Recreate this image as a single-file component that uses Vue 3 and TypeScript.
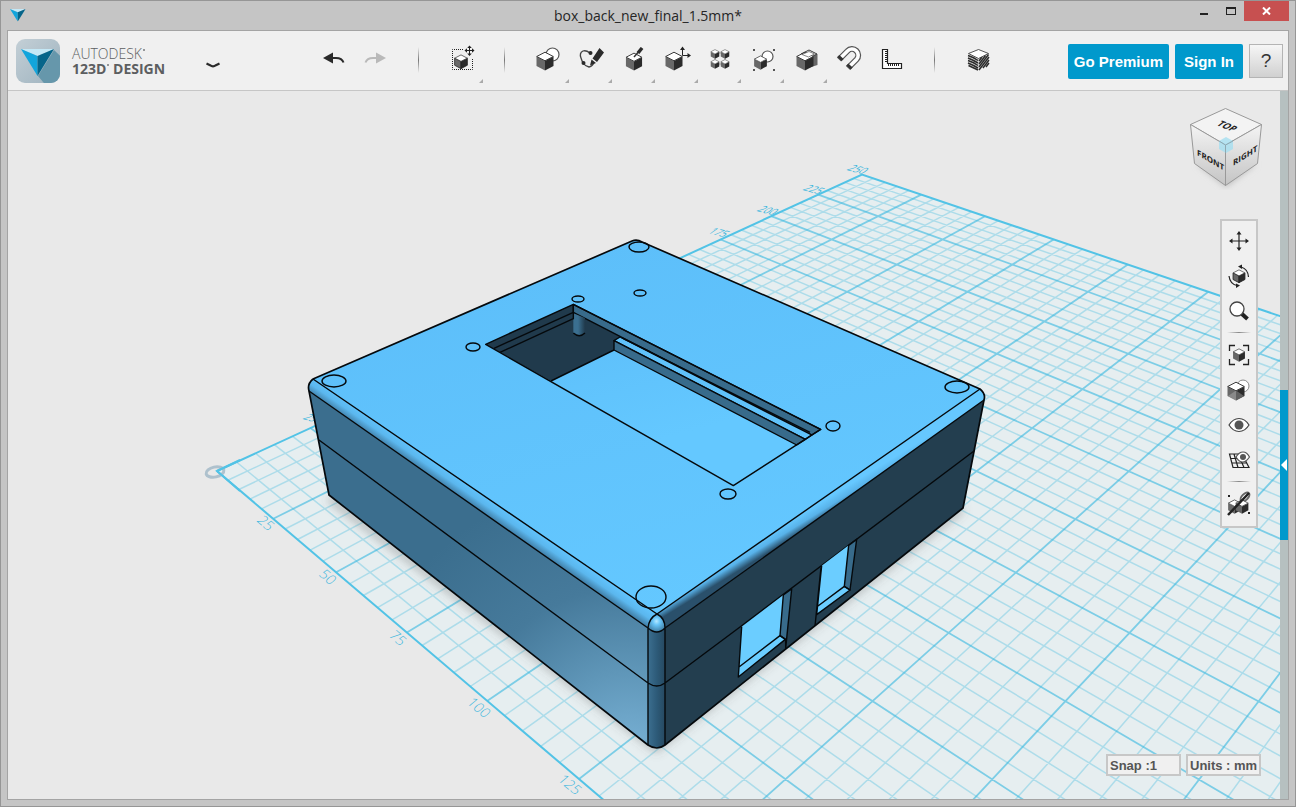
<script setup lang="ts">
interface Tool {
  id: string
  label: string
  menu?: boolean
}
interface PlaneLabel {
  text: string
  x: number
  y: number
}
type Point = [number, number]

const tools: Tool[] = [
  { id: 'undo', label: 'Undo' },
  { id: 'redo', label: 'Redo' },
  { id: 'sep', label: '' },
  { id: 'transform', label: 'Transform', menu: true },
  { id: 'sep', label: '' },
  { id: 'primitives', label: 'Primitives', menu: true },
  { id: 'sketch', label: 'Sketch', menu: true },
  { id: 'construct', label: 'Construct', menu: true },
  { id: 'modify', label: 'Modify', menu: true },
  { id: 'pattern', label: 'Pattern', menu: true },
  { id: 'grouping', label: 'Grouping', menu: true },
  { id: 'combine', label: 'Combine', menu: true },
  { id: 'snap', label: 'Snap' },
  { id: 'measure', label: 'Measure' },
  { id: 'sep', label: '' },
  { id: 'material', label: 'Material' },
]

const navTools: Tool[] = [
  { id: 'pan', label: 'Pan' },
  { id: 'orbit', label: 'Orbit' },
  { id: 'zoom', label: 'Zoom' },
  { id: 'sep', label: '' },
  { id: 'fit', label: 'Fit' },
  { id: 'shading', label: 'Materials and outlines' },
  { id: 'show', label: 'Show solids' },
  { id: 'grid', label: 'Grid visibility' },
  { id: 'sep', label: '' },
  { id: 'snapping', label: 'Group snapping' },
]

const BED = 250

// Perspective projection of a work-plane point in millimetres.
function project(u: number, v: number): Point {
  const w = 1 - 0.0021176 * u + 0.0021052 * v
  return [
    (217 + 1.6698 * u + 4.3947 * v) / w,
    (471 + 0.8144 * u - 0.8187 * v) / w,
  ]
}

function fmt(p: Point): string {
  return `${p[0].toFixed(1)} ${p[1].toFixed(1)}`
}

function gridPath(major: boolean): string {
  let d = ''
  for (let t = 5; t < BED; t += 5) {
    if ((t % 25 === 0) !== major) continue
    d += `M${fmt(project(t, 0))}L${fmt(project(t, BED))}`
    d += `M${fmt(project(0, t))}L${fmt(project(BED, t))}`
  }
  return d
}

const minorLines = gridPath(false)
const majorLines = gridPath(true)
const bed = 'M' + [project(0, 0), project(0, BED), project(BED, BED), project(BED, 0)].map(fmt).join('L') + 'Z'

const nearLabels: PlaneLabel[] = [
  { text: '25', x: 256, y: 521 },
  { text: '50', x: 318, y: 575 },
  { text: '75', x: 388, y: 636 },
  { text: '100', x: 466, y: 703 },
  { text: '125', x: 557, y: 780 },
]
const farLabels: PlaneLabel[] = [
  { text: '25', x: 302, y: 419 },
  { text: '175', x: 707, y: 233 },
  { text: '200', x: 756, y: 211 },
  { text: '225', x: 802, y: 190 },
  { text: '250', x: 846, y: 170 },
]

const holes: number[][] = [
  [639, 247, 10, 5],
  [640, 293, 6, 3],
  [578, 299, 6, 3],
  [473, 347, 7, 4],
  [833, 426, 7, 5],
  [728, 494, 8, 5],
  [334, 381, 12, 6],
  [957, 387, 12, 6],
  [651, 597, 15, 11],
]
</script>

<template>
  <div class="window">
    <svg class="defs" aria-hidden="true">
      <symbol id="cube" viewBox="0 0 18 20">
        <path d="M.5 5.5 9 10v9.5L.5 15z" fill="#686868" />
        <path d="M17.500 5.500 9 10v9.500L17.500 15z" fill="#2b2b2b" />
        <path d="M9 1.200 17.300 5.500 9 9.800.700 5.500z" fill="#fff" stroke="#3a3a3a" stroke-width="1" />
      </symbol>
      <symbol id="mark" viewBox="0 0 34 28">
        <path d="M0 1 33 1 16.500 8z" fill="#c4e8f6" />
        <path d="M0 1 16.500 8V28z" fill="#12a5dc" />
        <path d="M33 1 16.500 8V28z" fill="#05658a" />
      </symbol>
    </svg>

    <header class="titlebar">
      <svg class="app-icon" viewBox="0 0 34 28"><use href="#mark" /></svg>
      <h1>box_back_new_final_1.5mm*</h1>
      <div class="window-buttons">
        <button type="button" aria-label="Minimize"><i class="dash"></i></button>
        <button type="button" aria-label="Maximize"><i class="square"></i></button>
        <button type="button" class="close" aria-label="Close">
          <svg width="9" height="8" viewBox="0 0 9 8"><path d="M1 .5 8 7.500M8 .5 1 7.500" stroke="#fff" stroke-width="2" /></svg>
        </button>
      </div>
    </header>

    <div class="client">
      <div class="toolbar">
        <div class="brand">
          <svg class="logo" viewBox="0 0 44 44">
            <defs>
              <linearGradient id="tile" x2="1" y2="1">
                <stop offset="0" stop-color="#c3cfd6" />
                <stop offset="1" stop-color="#9fb3bf" />
              </linearGradient>
              <clipPath id="tileClip"><rect width="44" height="44" rx="9" /></clipPath>
            </defs>
            <g clip-path="url(#tileClip)">
              <rect width="44" height="44" fill="url(#tile)" />
              <path d="M38 11 56 28V56H38L22 37z" fill="#6697ab" />
            </g>
            <use href="#mark" x="5" y="9" width="34" height="28" />
          </svg>
          <div class="brand-name">
            <span><span class="reg">AUTODESK</span></span>
            <strong><span class="reg">123D</span> DESIGN</strong>
          </div>
          <button type="button" class="chevron" aria-label="Application menu">
            <svg width="14" height="7" viewBox="0 0 14 7"><path d="M.5 1.500 4 3.200Q7 5.500 10 3.200L13.500 1.500" fill="none" stroke="#2a2a2a" stroke-width="2.200" /></svg>
          </button>
        </div>

        <nav class="tools" aria-label="Tools">
          <template v-for="(tool, i) in tools" :key="i">
            <span v-if="tool.id === 'sep'" class="divider"></span>
            <button v-else type="button" :class="{ menu: tool.menu }" :aria-label="tool.label">
              <svg :viewBox="`${312 + 43 * i} 31 43 59`">
                <g v-if="tool.id === 'undo'" fill="#292929">
                  <path d="M323 58 333 52.500V63.500z" />
                  <path d="M332 58h4q6 0 7.500 4.500" fill="none" stroke="#292929" stroke-width="2" />
                </g>
                <g v-else-if="tool.id === 'redo'" fill="#b9b9b9">
                  <path d="M386 58 376 52.500V63.500z" />
                  <path d="M377 58h-4q-6 0-7.500 4.500" fill="none" stroke="#b9b9b9" stroke-width="2" />
                </g>
                <g v-else-if="tool.id === 'transform'" fill="none" stroke="#222">
                  <path d="M463 49.500H452.500V69.500H472.500V59" stroke-dasharray="1 1" />
                  <use href="#cube" x="454" y="54" width="14" height="15" />
                  <path d="M469.500 46.500V55M465 50.500H474" />
                  <path d="M469.500 45.500l2.300 2.500h-4.600zM469.500 56l2.300-2.500h-4.600zM464.500 50.500l2.500-2.300v4.600zM474.500 50.500l-2.500-2.300v4.600z" fill="#222" stroke="none" />
                </g>
                <g v-else-if="tool.id === 'primitives'">
                  <circle cx="552.500" cy="54.500" r="6.500" fill="#fff" stroke="#555" stroke-width="1.200" />
                  <use href="#cube" x="536" y="51" width="18" height="20" />
                </g>
                <g v-else-if="tool.id === 'sketch'" fill="#2b2b2b">
                  <path d="M590 53q-4-3-7-2-4 2-2 7 1 3 2 5 2 3 6 4 4-1 5-5" fill="none" stroke="#444" stroke-width="1.300" />
                  <circle cx="590.500" cy="53" r="2" /><circle cx="583.500" cy="63" r="2" />
                  <path d="M599.500 48 604 52.500 597 62 592.500 58.500zM591.500 59.500 596 63 590 65.500z" />
                </g>
                <g v-else-if="tool.id === 'construct'">
                  <use href="#cube" x="625" y="52" width="18" height="19" />
                  <path d="M634 57 642 48" stroke="#333" stroke-width="1.500" />
                  <path d="M638 53 642 48" stroke="#2b2b2b" stroke-width="3.500" />
                </g>
                <g v-else-if="tool.id === 'modify'" fill="#222">
                  <use href="#cube" x="665" y="51" width="18" height="20" />
                  <path d="M682.500 49V55.500H688" fill="none" stroke="#222" />
                  <path d="M682.500 46.500l2.500 3.500h-5zM691 55.500l-3.500-2.500v5z" />
                </g>
                <g v-else-if="tool.id === 'pattern'">
                  <path d="M715 54V63M725 54V63M716 53H726M716 64H726" stroke="#aaa" />
                  <use href="#cube" x="710" y="49" width="10" height="10" />
                  <use href="#cube" x="720" y="49" width="10" height="10" />
                  <use href="#cube" x="710" y="59" width="10" height="10" />
                  <use href="#cube" x="720" y="59" width="10" height="10" />
                </g>
                <g v-else-if="tool.id === 'grouping'">
                  <circle cx="767.500" cy="56.500" r="5.500" fill="#fff" stroke="#555" stroke-width="1.200" />
                  <use href="#cube" x="753" y="55" width="15" height="15" />
                  <path d="M753 49h2v2h-2zM773 49h2v2h-2zM753 69h2v2h-2zM773 69h2v2h-2z" fill="#555" />
                </g>
                <g v-else-if="tool.id === 'combine'">
                  <path d="M805 55 817.500 54V65L805 69z" fill="#666" />
                  <path d="M801 54 809 50 817 54 810 57.500z" fill="#fff" stroke="#3a3a3a" />
                  <use href="#cube" x="796" y="51" width="18" height="20" />
                  <path d="M802 54.500 809 51.500 814.500 54 808.500 57z" fill="#fff" stroke="#555" stroke-width=".7" />
                </g>
                <g v-else-if="tool.id === 'snap'" fill="none">
                  <path d="M839 59.500 847.500 51A5.500 5.500 0 0 1 856.500 59.500L848 68" stroke="#555" stroke-width="6" />
                  <path d="M840 58.500 847.500 51A5.500 5.500 0 0 1 856.500 59.500L849 67" stroke="#fff" stroke-width="3.600" />
                  <path d="M839.500 59 841.500 57M848.500 67.500 850.500 65.500" stroke="#333" stroke-width="6" />
                </g>
                <g v-else-if="tool.id === 'measure'" fill="none" stroke="#222">
                  <path d="M882.500 49.500h5V63.500h14v5h-19z" fill="#fff" stroke-width="1.200" />
                  <path d="M885 51.500h2M885 53.500h2M885 55.500h2M885 57.500h2M885 59.500h2M885 61.500h2M888.500 64v2M890.500 64v2M892.500 64v2M894.500 64v2M896.500 64v2M898.500 64v2" />
                </g>
                <g v-else-if="tool.id === 'material'" fill="none" stroke="#2b2b2b">
                  <path d="M968 54 978.500 58V70L968 65zM989 54 978.500 58V70L989 64z" fill="#ddd" stroke="none" />
                  <path d="M968 55.500Q973 57 978 60.500M968 58Q973 60 978 63M968 60.500Q973 62 978 65.500M968 63Q973 65 978 68M968.500 65.500 978 70" stroke-width="1.500" />
                  <path d="M979 61 982 57M979 64 985.500 55.500M979 67 988.500 54.500M979 70 989 57M983 68 989 60M986 67 989 63" stroke-width="1.400" />
                  <path d="M978.500 49.500 988.500 53.500 978.500 58.500 968.500 53.500z" fill="#fff" stroke-width=".8" />
                </g>
              </svg>
            </button>
          </template>
        </nav>

        <div class="account">
          <button type="button" class="primary">Go Premium</button>
          <button type="button" class="primary">Sign In</button>
          <button type="button" class="help">?</button>
        </div>
      </div>

      <main class="stage">
        <svg class="scene" viewBox="8 91 1280 708" preserveAspectRatio="xMidYMid slice">
          <defs>
            <linearGradient id="topFace" gradientUnits="userSpaceOnUse" x1="600" y1="240" x2="700" y2="610">
              <stop offset="0" stop-color="#5dbffa" />
              <stop offset="1" stop-color="#64c8ff" />
            </linearGradient>
            <radialGradient id="leftFace" gradientUnits="userSpaceOnUse" cx="630" cy="755" r="280">
              <stop offset="0" stop-color="#79b2d6" />
              <stop offset=".3" stop-color="#5f96b8" />
              <stop offset=".6" stop-color="#467a9b" />
              <stop offset="1" stop-color="#3b6e8e" />
            </radialGradient>
            <linearGradient id="leftFillet" gradientUnits="userSpaceOnUse" x1="450" y1="471" x2="441" y2="484">
              <stop offset="0" stop-color="#62c4fd" />
              <stop offset=".5" stop-color="#5bb7ee" />
              <stop offset="1" stop-color="#407da5" />
            </linearGradient>
            <linearGradient id="rightFillet" gradientUnits="userSpaceOnUse" x1="792" y1="520" x2="800" y2="533">
              <stop offset="0" stop-color="#66c8ff" />
              <stop offset=".5" stop-color="#58b2e9" />
              <stop offset="1" stop-color="#2a506b" />
            </linearGradient>
            <linearGradient id="column">
              <stop offset="0" stop-color="#3c6f90" />
              <stop offset=".5" stop-color="#2d5b79" />
              <stop offset="1" stop-color="#264961" />
            </linearGradient>
            <linearGradient id="pin">
              <stop offset="0" stop-color="#3b6f90" />
              <stop offset=".4" stop-color="#3b6f90" />
              <stop offset="1" stop-color="#203a4c" />
            </linearGradient>
            <radialGradient id="ball" cx=".5" cy=".4" r=".7">
              <stop offset="0" stop-color="#b5e8ff" />
              <stop offset=".3" stop-color="#68c5f8" />
              <stop offset="1" stop-color="#356b8e" />
            </radialGradient>
            <filter id="soft"><feGaussianBlur stdDeviation="5" /></filter>
          </defs>

          <path :d="bed" fill="#e6eef0" />
          <path :d="minorLines" class="minor" />
          <path :d="majorLines" class="major" />
          <path :d="bed" class="bed-edge" />
          <ellipse cx="215" cy="472" rx="9" ry="5" fill="none" stroke="#9fb6c5" stroke-opacity=".8" stroke-width="3" transform="rotate(-12 215 472)" />
          <path d="M217 471 240 460M217 471 240 491" class="bed-edge" />

          <g class="ruler">
            <text v-for="l in nearLabels" :key="l.text" :transform="`translate(${l.x} ${l.y}) rotate(40) skewX(-10)`" font-size="14">{{ l.text }}</text>
            <text v-for="l in farLabels" :key="l.text" class="far" :transform="`translate(${l.x} ${l.y}) rotate(14) skewX(-40)`" font-size="10">{{ l.text }}</text>
          </g>

          <path d="M330 498 656 748 962 508" fill="none" stroke="#555" stroke-opacity=".35" stroke-width="8" filter="url(#soft)" />

          <g class="model">
            <path d="M309 391 648 628V745L329 495z" fill="url(#leftFace)" />
            <path d="M665 628 984 400 963 508 665 745z" fill="#233e4f" />
            <path d="M648 628Q657 636 665 628V745Q657 751 648 745z" fill="url(#column)" />
            <path d="M313 379 635 240 641 242 980 389 657 614z" fill="url(#topFace)" />
            <path d="M313 379 657 614 648 628 309 391Q307 384 313 379z" fill="url(#leftFillet)" />
            <path d="M657 614 980 389Q985 393 984 400L665 628z" fill="url(#rightFillet)" />
            <path d="M648 628Q649 618 657 614 665 618 665 628 657 636 648 628z" fill="url(#ball)" />
            <g class="edges">
              <path d="M313 379 632 241Q637 239 642 242L980 389Q986 394 984 400L963 508 665 745Q657 751 648 745L329 495 309 391Q307 384 313 379" stroke-width="1.700" />
              <path d="M313 379 657 614 980 389M309 391 648 628Q657 636 665 628L984 400M319 440 648 683Q657 689 665 683L740 627 974 451M648 628V745M665 628V745M648 628Q649 618 657 614 665 618 665 628" />
            </g>
          </g>

          <g transform="translate(450 230) scale(.33333)" class="edges detail">
            <path d="M107 343 370 223 1112 598 850 767z" fill="url(#topFace)" stroke="none" />
            <path d="M107 343 370 223 540 318 495 330 492 360 303 453z" fill="#203a4c" stroke="none" />
            <path d="M370 223 1112 598 1085 615 370 247z" fill="#386b8b" />
            <path d="M370 250V309Q388 325 405 309V264z" fill="url(#pin)" stroke="none" />
            <path d="M370 309Q388 325 405 309" />
            <path d="M492 332 510 321 1085 615 1066 628z" fill="#60c2fa" />
            <path d="M492 332 1066 628 1040 645 492 360z" fill="#386b8b" />
            <path d="M132 355 370 247M150 367 370 266M370 223V268M303 453 492 360M515 323 1080 607M520 326 600 365" />
            <path d="M107 343 370 223 1112 598 850 767z" />
          </g>

          <g transform="translate(600 520) scale(.33333)" class="edges detail">
            <path d="M425 320 550 225 540 347 556 358 415 471z" fill="#6bcdff" stroke="none" />
            <path d="M550 225 575 207 557 385V358L540 347z" fill="#386b8b" />
            <path d="M425 320 415 471 556 358 540 347 417 441" />
            <path d="M665 137 746 76 733 199 750 210 650 284z" fill="#6bcdff" stroke="none" />
            <path d="M746 76 770 58 750 210 733 199z" fill="#386b8b" />
            <path d="M665 137 650 284 750 210 733 199 654 258M663 143 645 318" />
          </g>

          <ellipse v-for="(h, i) in holes" :key="i" :cx="h[0]" :cy="h[1]" :rx="h[2]" :ry="h[3]" class="hole" />
        </svg>

        <svg class="view-cube" viewBox="1180 98 92 98" role="img" aria-label="View cube">
          <defs>
            <linearGradient id="cubeSide" x2="0" y2="1">
              <stop offset="0" stop-color="#f4f4f4" />
              <stop offset="1" stop-color="#c4c4c4" />
            </linearGradient>
            <filter id="cubeShadow"><feGaussianBlur stdDeviation="3" /></filter>
          </defs>
          <path d="M1197 164 1226 187 1256 164" fill="#bbb" filter="url(#cubeShadow)" />
          <g stroke="#999" stroke-width="1">
            <path d="M1190.500 124.500 1225.500 108.500 1261.500 124.500 1225.500 145z" fill="#f3f3f3" />
            <path d="M1190.500 124.500 1225.500 145V185.500L1194.500 163.500z" fill="url(#cubeSide)" />
            <path d="M1261.500 124.500 1225.500 145V185.500L1257.500 163.500z" fill="url(#cubeSide)" />
          </g>
          <path d="M1226 137 1233 141V149L1226 153 1219 149V141z" fill="#a5dff0" fill-opacity=".8" />
          <path d="M1219 141 1225.500 145 1233 141M1225.500 145V153" fill="none" stroke="#8fa9b2" />
          <g class="cube-text">
            <text class="top-face" transform="translate(1216 125) rotate(22) skewX(-30)">TOP</text>
            <text transform="translate(1197 155) skewY(30)">FRONT</text>
            <text transform="translate(1233 166) skewY(-32)">RIGHT</text>
          </g>
        </svg>

        <div class="nav-panel" role="toolbar" aria-label="Navigation">
          <template v-for="(tool, i) in navTools" :key="i">
            <span v-if="tool.id === 'sep'" class="rule"></span>
            <button v-else type="button" :aria-label="tool.label">
              <svg viewBox="-17 -17 34 34">
                <g v-if="tool.id === 'pan'" fill="#222">
                  <path d="M0-8V8M-8 0H8" stroke="#222" stroke-width="1.200" />
                  <path d="M0-10 2.500-6.500h-5zM0 10 2.500 6.500h-5zM-10 0-6.500-2.500v5zM10 0 6.500-2.500v5z" />
                </g>
                <g v-else-if="tool.id === 'orbit'" fill="none" stroke="#222" stroke-width="1.200">
                  <use href="#cube" x="-7" y="-7" width="14" height="14" />
                  <path d="M2-9Q9-7 9.500 1M-10 0Q-9 8-2 9.500" />
                  <path d="M-1-9.500 3-11.500V-7zM1 9.500-3 7.500V12z" fill="#222" stroke="none" />
                </g>
                <g v-else-if="tool.id === 'zoom'">
                  <path d="M3 3 8.500 8" stroke="#222" stroke-width="4" />
                  <circle cx="-2" cy="-2" r="7" fill="#fff" stroke="#444" stroke-width="1.300" />
                </g>
                <g v-else-if="tool.id === 'fit'">
                  <path d="M-9.500-4V-9.500H-4M4-9.500H9.500V-4M9.500 4V9.500H4M-4 9.500H-9.500V4" fill="none" stroke="#222" stroke-width="1.300" />
                  <use href="#cube" x="-7" y="-7" width="14" height="14" />
                </g>
                <g v-else-if="tool.id === 'shading'">
                  <circle cx="4" cy="-4" r="6" fill="#fff" stroke="#888" />
                  <use href="#cube" x="-12" y="-9" width="18" height="20" />
                  <path d="M-11 6-3 .5V10.500z" fill="#aaa" fill-opacity=".5" />
                  <path d="M-3 .5 5 6-3 10.500z" fill="#777" fill-opacity=".7" />
                </g>
                <g v-else-if="tool.id === 'show'">
                  <path d="M-10 0Q-6-6.500 0-6.500T10 0Q6 6.500 0 6.500T-10 0z" fill="#fff" stroke="#444" stroke-width="1.200" />
                  <circle r="4.500" fill="#555" />
                </g>
                <g v-else-if="tool.id === 'grid'" fill="none" stroke="#222" stroke-width="1.200">
                  <path d="M-9.500-6H3L10 7.500H-6zM-8.500-1.500H5.500M-7 3H8M-5-6-1 7.500M-1-6 5 7.500" />
                  <path d="M-3-3Q0-8 4-8T10.500-3Q7 2 3.500 2T-3-3z" fill="#fff" stroke="#555" />
                  <circle cx="4" cy="-3" r="3" fill="#555" stroke="none" />
                </g>
                <g v-else-if="tool.id === 'snapping'">
                  <ellipse cx="6" cy="-7" rx="5.500" ry="3" transform="rotate(-45 6 -7)" fill="#fff" stroke="#666" stroke-width="2" />
                  <use href="#cube" x="-12" y="-5" width="15" height="15" />
                  <use href="#cube" x="-4" y="-5" width="14" height="15" />
                  <path d="M-11 11 10-11" stroke="#222" stroke-width="2.500" />
                  <path d="M-11-9h2v2h-2zM9 8h2v2h-2z" fill="#222" />
                </g>
              </svg>
            </button>
          </template>
        </div>

        <div class="status">
          <button type="button">Snap :1</button>
          <button type="button">Units : mm</button>
        </div>

        <div class="drawer">
          <button type="button" aria-label="Open parts panel">
            <svg width="6" height="12" viewBox="0 0 6 12"><path d="M6 0V12L0 6z" fill="#fff" /></svg>
          </button>
        </div>
      </main>
    </div>
  </div>
</template>

<style>
body {
  margin: 0;
}
</style>

<style scoped>
.window {
  box-sizing: border-box;
  display: flex;
  flex-direction: column;
  height: 100vh;
  padding: 0 6px 6px;
  border: 1px solid #969696;
  background: #c5c5c5;
  font-family: "Liberation Sans", Arial, sans-serif;
  overflow: hidden;
}
.defs {
  position: absolute;
  width: 0;
  height: 0;
}
button {
  margin: 0;
  padding: 0;
  border: 0;
  background: none;
  color: inherit;
  font: inherit;
}
svg {
  display: block;
}
.titlebar {
  flex: 0 0 29px;
  display: grid;
  grid-template-columns: 1fr auto 1fr;
  align-items: start;
}
.app-icon {
  width: 16px;
  height: 14px;
  margin: 7px 0 0 3px;
}
h1 {
  margin: 0;
  color: #262626;
  font: 400 14px/29px "Open Sans", "Noto Sans", sans-serif;
}
.window-buttons {
  display: flex;
  justify-content: flex-end;
}
.window-buttons button {
  display: grid;
  place-items: center;
  width: 27px;
  height: 20px;
}
.window-buttons .close {
  width: 45px;
  background: #c75050;
}
.dash {
  width: 8px;
  height: 2px;
  margin-top: 6px;
  background: #222;
}
.square {
  box-sizing: border-box;
  width: 10px;
  height: 8px;
  border: 1px solid #222;
  border-top-width: 2px;
}
.client {
  flex: 1;
  display: flex;
  flex-direction: column;
  min-height: 0;
  border: 1px solid #a4a4a4;
}
.toolbar {
  flex: 0 0 59px;
  display: flex;
  background: #f0f0f0;
  border-bottom: 1px solid #c6c6c6;
}
.brand {
  flex: 0 0 296px;
  display: flex;
  align-items: center;
  padding-left: 8px;
}
.logo {
  width: 44px;
  height: 44px;
}
.brand-name {
  width: 120px;
  margin-left: 12px;
  color: #5c5e60;
  font: 300 14px/15px "Open Sans", "Noto Sans", sans-serif;
  white-space: nowrap;
}
.brand-name > span,
.brand-name > strong {
  display: block;
}
.brand-name > strong {
  font-weight: 700;
}
.reg::after {
  content: "";
  display: inline-block;
  width: 2px;
  height: 2px;
  margin-left: 1px;
  border-radius: 1px;
  background: #77797b;
  vertical-align: 8px;
}
.chevron {
  display: grid;
  place-items: center;
  width: 42px;
  height: 40px;
  padding-top: 9px;
}
.tools {
  display: flex;
}
.tools button,
.divider {
  position: relative;
  width: 43px;
  height: 59px;
}
.tools svg {
  width: 43px;
  height: 59px;
}
.menu::after {
  content: "";
  position: absolute;
  right: 1px;
  bottom: 7px;
  border: 2px solid transparent;
  border-right-color: #aaa;
  border-bottom-color: #aaa;
}
.divider::before {
  content: "";
  display: block;
  width: 1px;
  height: 26px;
  margin: 16px 0 0 20px;
  background: linear-gradient(#f0f0f0, #777, #f0f0f0);
}
.account {
  display: flex;
  gap: 6px;
  margin-left: auto;
  padding: 13px 5px 0 0;
}
.account button {
  box-sizing: border-box;
  height: 35px;
}
.account .primary {
  padding: 0 6px;
  border-radius: 2px;
  background: #0099cc;
  color: #fff;
  font-size: 15px;
  font-weight: 700;
}
.account .primary + .primary {
  padding: 0 9px;
}
.account .help {
  width: 34px;
  height: 34px;
  border: 1px solid #b4b4b4;
  background: linear-gradient(#f6f6f6, #d0d0d0);
  color: #333;
  font-size: 19px;
}
.stage {
  position: relative;
  flex: 1;
  min-height: 0;
  background: #e9e9e9;
  overflow: hidden;
}
.scene {
  width: 100%;
  height: 100%;
}
.minor {
  fill: none;
  stroke: #35b8dd;
  stroke-opacity: 0.32;
  stroke-width: 1.5;
}
.major {
  fill: none;
  stroke: #35b8e0;
  stroke-opacity: 0.6;
  stroke-width: 1.8;
}
.bed-edge {
  fill: none;
  stroke: #52c3e6;
  stroke-width: 2;
}
.ruler {
  fill: #3fb8de;
  font-family: "Open Sans", sans-serif;
  font-weight: 300;
}
.far {
  font-weight: 400;
}
.edges {
  fill: none;
  stroke: #05090c;
  stroke-width: 1.4;
  stroke-linejoin: round;
}
.detail path {
  vector-effect: non-scaling-stroke;
}
.hole {
  fill: none;
  stroke: #05090c;
  stroke-width: 1.4;
}
.view-cube {
  position: absolute;
  top: 7px;
  right: 16px;
  width: 92px;
  height: 98px;
}
.cube-text {
  fill: #222;
  font: 700 8px "Open Sans", sans-serif;
}
.top-face {
  font-size: 9px;
}
.nav-panel {
  position: absolute;
  top: 128px;
  right: 30px;
  display: flex;
  flex-direction: column;
  width: 34px;
  padding: 2px 0 5px;
  border: 2px solid #c7c7c7;
  background: #f0f0f0;
}
.nav-panel button {
  height: 35px;
}
.nav-panel svg {
  width: 34px;
  height: 34px;
}
.rule {
  height: 9px;
  background: linear-gradient(90deg, transparent, #888, transparent) center / 24px 1px no-repeat;
}
.status {
  position: absolute;
  right: 27px;
  bottom: 23px;
  display: flex;
  gap: 5px;
}
.status button {
  box-sizing: border-box;
  width: 75px;
  height: 22px;
  padding: 0 2px;
  border: 2px solid #c7c7c7;
  background: #f0f0f0;
  color: #555;
  font-size: 13px;
  font-weight: 700;
  text-align: left;
  white-space: nowrap;
}
.drawer {
  position: absolute;
  top: 0;
  right: 0;
  bottom: 0;
  width: 8px;
  background: #b6c0c0;
}
.drawer button {
  position: absolute;
  top: 299px;
  display: grid;
  place-items: center;
  width: 8px;
  height: 150px;
  background: #0099cc;
}
</style>
